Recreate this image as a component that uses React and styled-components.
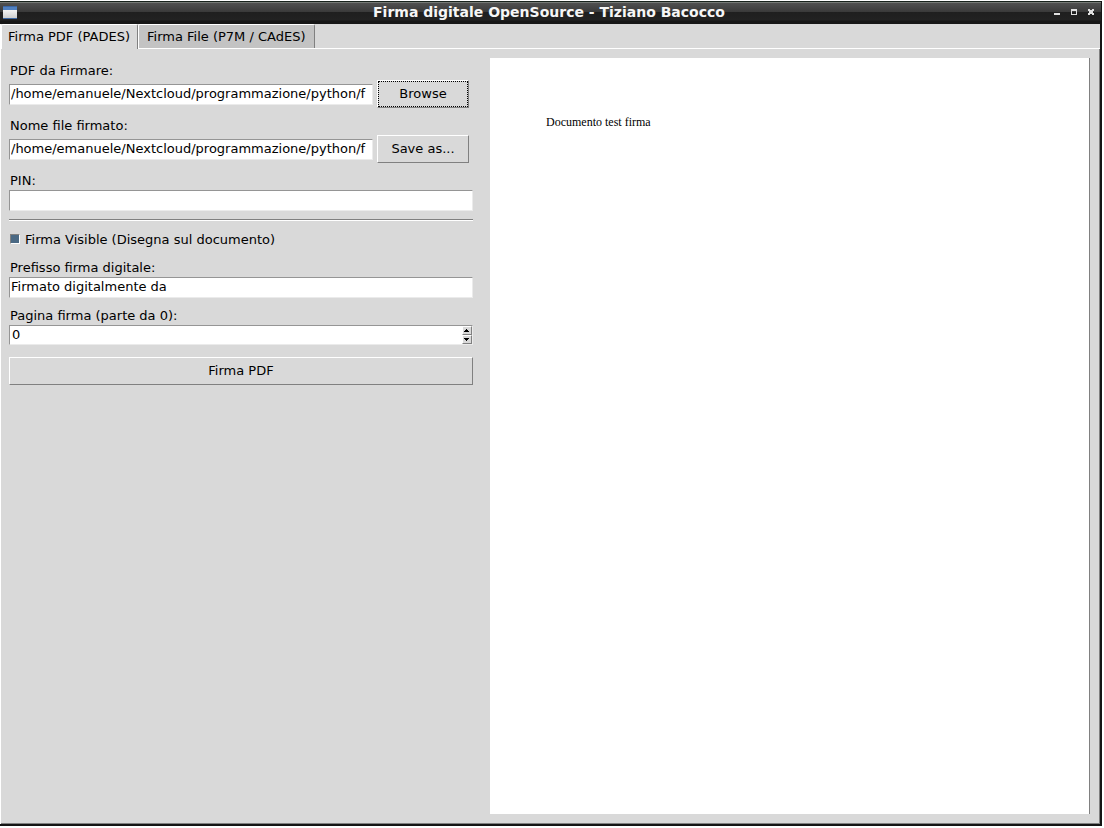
import React, { useState } from "react";
import styled, { createGlobalStyle } from "styled-components";

const FACE = "#d9d9d9";
const UI_FONT = '"DejaVu Sans", sans-serif';

const GlobalStyle = createGlobalStyle`
  * { box-sizing: border-box; }
  body { margin: 0; background: #ffffff; }
  button, input { font: inherit; color: inherit; border-radius: 0; margin: 0; }
`;

const Desktop = styled.div`
  display: flex;
  min-height: 100vh;
  padding: 1px 2px 2px 0;
`;

const Window = styled.div`
  flex: 1;
  min-width: 0;
  display: flex;
  flex-direction: column;
  background: #151515;
  padding: 0 2px 2px 0;
  font: 13px/20px ${UI_FONT};
  color: #000000;
`;

const TitleBar = styled.header`
  display: grid;
  grid-template-columns: 60px 1fr 60px;
  align-items: center;
  height: 23px;
  margin-right: -1px;
  padding: 0 6px 2px 3px;
  border-top: 1px solid #18221c;
  background: linear-gradient(#767a76 0 1px, #505050 1px, #3a3a3a 10px, #1f1f1f 10px, #222222 18px, #161616 19px, #161616 100%);
`;

const Title = styled.h1`
  margin: 0;
  font-size: 14px;
  line-height: 20px;
  font-weight: bold;
  text-align: center;
  color: #f6f6f6;
  white-space: nowrap;
`;

const Controls = styled.div`
  display: flex;
  justify-content: flex-end;
  gap: 10px;
`;

const ControlButton = styled.button`
  display: flex;
  padding: 0;
  border: 0;
  background: none;
`;

const Client = styled.div`
  flex: 1;
  display: flex;
  flex-direction: column;
  background: ${FACE};
  border-left: 1px solid #ffffff;
`;

const TabList = styled.div`
  display: flex;
  height: 24px;
  align-items: stretch;
`;

const Tab = styled.button`
  height: ${(p) => (p.$active ? 25 : 24)}px;
  padding: ${(p) => (p.$active ? "0 7px 1px 6px" : "0 8px")};
  border: 1px solid;
  border-color: #ffffff #808080 transparent #ffffff;
  border-bottom: 0;
  border-radius: 2px 2px 0 0;
  background: ${(p) => (p.$active ? FACE : "#c3c3c3")};
  white-space: nowrap;
`;

const Pane = styled.main`
  flex: 1;
  display: grid;
  grid-template-columns: 464px minmax(0, 1fr);
  gap: 17px;
  padding: 9px 9px 9px 8px;
  border-right: 1px solid #808080;
  border-bottom: 1px solid #808080;
`;

const TabRule = styled.div`
  height: 1px;
  margin-left: ${(p) => p.$inset}px;
  background: #ffffff;
`;

const Form = styled.form`
  display: flex;
  flex-direction: column;
  gap: 7px;
  padding-top: 2px;
`;

const Group = styled.div`
  display: flex;
  flex-direction: column;
`;

const Label = styled.label`
  height: 20px;
  padding-left: 1px;
  line-height: 22px;
`;

const FileRow = styled.div`
  display: flex;
  align-items: center;
  gap: 4px;
  padding-right: 4px;
`;

const Entry = styled.input`
  flex: 1;
  width: 100%;
  min-width: 0;
  min-height: 21px;
  height: 21px;
  padding: 0 1px 2px;
  border: 1px solid;
  border-color: #959595 #ebebeb #ebebeb #959595;
  background: #ffffff;
  outline: 0;
`;

const PushButton = styled.button`
  width: ${(p) => (p.$wide ? "auto" : "92px")};
  height: 28px;
  padding: 0;
  border: 1px solid;
  border-color: #ffffff #808080 #808080 #ffffff;
  background: ${FACE};
  outline: ${(p) => (p.$focused ? "1px dotted #000000" : "0")};
  outline-offset: -2px;
`;

const Separator = styled.hr`
  width: 100%;
  margin: 1px 0;
  border: 0;
  border-top: 1px solid #808080;
  border-bottom: 1px solid #ffffff;
`;

const CheckRow = styled.label`
  display: flex;
  align-items: center;
  gap: 5px;
  height: 20px;
  padding-left: 1px;
  margin-bottom: 1px;
  line-height: 22px;
`;

const CheckBox = styled.input`
  appearance: none;
  width: 10px;
  height: 10px;
  border: 1px solid;
  border-color: #808080 #ffffff #ffffff #808080;
  background: #ffffff;
  &:checked { background: #4a6984; }
`;

const CheckText = styled.span`
  padding-top: 2px;
  line-height: 20px;
`;

const SpinBox = styled.div`
  display: flex;
  align-items: center;
  height: 20px;
  border: 1px solid;
  border-color: #959595 #ebebeb #ebebeb #959595;
  background: #ffffff;
`;

const SpinInput = styled.input`
  flex: 1;
  min-width: 0;
  height: 18px;
  padding: 0 2px;
  border: 0;
  background: none;
  outline: 0;
`;

const Arrows = styled.div`
  display: flex;
  flex-direction: column;
`;

const ArrowButton = styled.button`
  display: flex;
  align-items: center;
  justify-content: center;
  width: 10px;
  height: 9px;
  padding: 0;
  border: 1px solid;
  border-color: #ffffff #808080 #808080 #ffffff;
  background: ${FACE};
`;

const SubmitArea = styled.div`
  display: grid;
  padding-top: 5px;
`;

const Preview = styled.section`
  padding: 56px;
  border-right: 1px solid #808080;
  background: #ffffff;
  font: 12px/16px "Liberation Serif", serif;
`;

const PreviewText = styled.p`
  margin: 0;
`;

const PATH = "/home/emanuele/Nextcloud/programmazione/python/f";

function WindowIcon() {
  return (
    <svg width="14" height="13" viewBox="0 0 14 13" aria-hidden="true">
      <defs>
        <linearGradient id="sheet" x1="0" y1="0" x2="0" y2="1">
          <stop offset="0" stopColor="#f4f4f4" />
          <stop offset="1" stopColor="#cfcfcf" />
        </linearGradient>
      </defs>
      <rect width="14" height="13" fill="#3c67a4" />
      <rect y="1" width="14" height="3" fill="#4f80c0" />
      <rect y="4" width="14" height="8" fill="url(#sheet)" />
    </svg>
  );
}

const CONTROL_SHAPES = {
  Minimizza: "M0 4H6V6H0Z",
  Massimizza: "M0 0H6V6H0ZM1 2V5H5V2Z",
  Chiudi: "M0 0H2V1H4V0H6V2H5V4H6V6H4V5H2V6H0V4H1V2H0Z",
};

function Control({ name }) {
  return (
    <ControlButton type="button" aria-label={name}>
      <svg width="7" height="6" viewBox="0 0 7 6" shapeRendering="crispEdges">
        <path d={CONTROL_SHAPES[name]} fill="#e0e0e0" fillRule="evenodd" />
      </svg>
    </ControlButton>
  );
}

function Arrow({ down }) {
  return (
    <svg width="6" height="3" viewBox="0 0 6 3" shapeRendering="crispEdges" aria-hidden="true">
      <path d={down ? "M0 0H5V1H4V2H3V3H2V2H1V1H0Z" : "M2 0H3V1H4V2H5V3H0V2H1V1H2Z"} />
    </svg>
  );
}

function FileField({ id, label, button, focused }) {
  return (
    <Group>
      <Label htmlFor={id}>{label}</Label>
      <FileRow>
        <Entry id={id} defaultValue={PATH} spellCheck={false} />
        <PushButton type="button" $focused={focused}>{button}</PushButton>
      </FileRow>
    </Group>
  );
}

export default function App() {
  const [page, setPage] = useState(0);
  return (
    <Desktop>
      <GlobalStyle />
      <Window>
        <TitleBar>
          <WindowIcon />
          <Title>Firma digitale OpenSource - Tiziano Bacocco</Title>
          <Controls>
            <Control name="Minimizza" />
            <Control name="Massimizza" />
            <Control name="Chiudi" />
          </Controls>
        </TitleBar>
        <Client>
          <TabList role="tablist">
            <Tab role="tab" aria-selected="true" $active>Firma PDF (PADES)</Tab>
            <Tab role="tab" aria-selected="false">Firma File (P7M / CAdES)</Tab>
          </TabList>
          <TabRule $inset={137} />
          <Pane>
            <Form onSubmit={(e) => e.preventDefault()}>
              <FileField id="source" label="PDF da Firmare:" button="Browse" focused />
              <FileField id="target" label="Nome file firmato:" button="Save as..." />
              <Group>
                <Label htmlFor="pin">PIN:</Label>
                <Entry id="pin" type="password" />
              </Group>
              <Separator />
              <CheckRow>
                <CheckBox type="checkbox" defaultChecked />
                <CheckText>Firma Visible (Disegna sul documento)</CheckText>
              </CheckRow>
              <Group>
                <Label htmlFor="prefix">Prefisso firma digitale:</Label>
                <Entry id="prefix" defaultValue="Firmato digitalmente da" spellCheck={false} />
              </Group>
              <Group>
                <Label htmlFor="page">Pagina firma (parte da 0):</Label>
                <SpinBox>
                  <SpinInput
                    id="page"
                    inputMode="numeric"
                    value={page}
                    onChange={(e) => setPage(Number(e.target.value) || 0)}
                  />
                  <Arrows>
                    <ArrowButton type="button" aria-label="Pagina successiva" onClick={() => setPage(page + 1)}>
                      <Arrow />
                    </ArrowButton>
                    <ArrowButton type="button" aria-label="Pagina precedente" onClick={() => setPage(Math.max(0, page - 1))}>
                      <Arrow down />
                    </ArrowButton>
                  </Arrows>
                </SpinBox>
              </Group>
              <SubmitArea>
                <PushButton type="submit" $wide>Firma PDF</PushButton>
              </SubmitArea>
            </Form>
            <Preview>
              <PreviewText>Documento test firma</PreviewText>
            </Preview>
          </Pane>
        </Client>
      </Window>
    </Desktop>
  );
}
